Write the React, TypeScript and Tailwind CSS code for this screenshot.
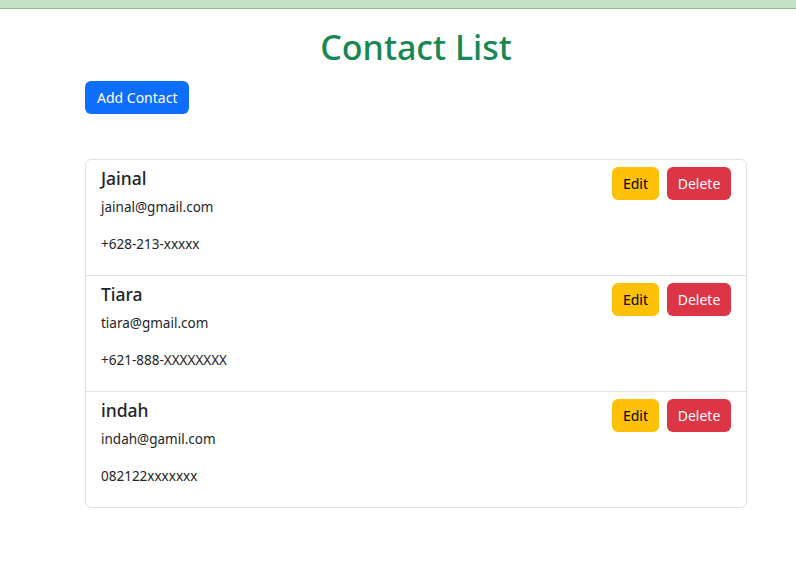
import React from 'react'

const contacts = [
    { name: "Jainal", email: "jainal@gmail.com", phone: "+628-213-xxxxx" },
    { name: "Tiara", email: "tiara@gmail.com", phone: "+621-888-XXXXXXXX" },
    { name: "indah", email: "indah@gamil.com", phone: "082122xxxxxxx" },
]

const App = () => {
    return (
        <div className="min-h-[564px] bg-white text-[#212529]" style={{ fontFamily: '"Noto Sans", "Open Sans", sans-serif' }}>
            {/* Top bar */}
            <div className="h-[9px] bg-[#c4e3c6] border-b border-[#96b398]" />

            <div className="ml-[85px] w-[662px]">
                <h1 className="mt-[14px] mb-[10px] text-center text-[34px] leading-[48px] font-medium text-[#198754]">
                    Contact List
                </h1>

                <button className="h-[33px] px-3 rounded-md bg-[#0d6efd] text-white text-[14px]">
                    Add Contact
                </button>

                {/* Contacts */}
                <ul className="mt-[45px] border border-[#dee2e6] rounded-md">
                    {contacts.map((contact, index) => (
                        <li
                            key={index}
                            className="h-[116px] flex justify-between pl-[15px] pr-[15px] pt-[7px] border-b border-[#dee2e6] last:border-b-0 last:h-[115px]"
                        >
                            <div>
                                <h5 className="text-[17.5px] leading-[22px] font-medium mb-[8px]">{contact.name}</h5>
                                <p className="text-[13.5px] leading-[21px] mb-[16px]">{contact.email}</p>
                                <p className="text-[13.5px] leading-[21px]">{contact.phone}</p>
                            </div>
                            <div className="flex gap-2 items-start">
                                <button className="h-[33px] w-[47px] rounded-md bg-[#ffc107] text-black text-[14px]">
                                    Edit
                                </button>
                                <button className="h-[33px] w-[64px] rounded-md bg-[#dc3545] text-white text-[14px]">
                                    Delete
                                </button>
                            </div>
                        </li>
                    ))}
                </ul>
            </div>
        </div>
    )
}

export default App
